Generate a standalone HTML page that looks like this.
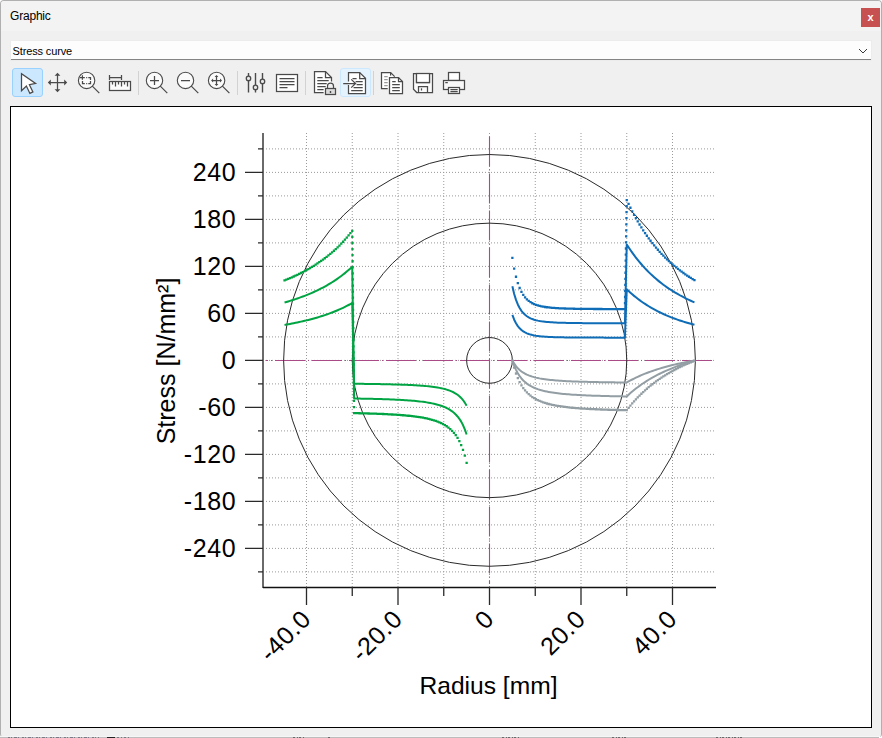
<!DOCTYPE html>
<html><head><meta charset="utf-8">
<style>
html,body{margin:0;padding:0;background:#fff;}
body{width:882px;height:738px;position:relative;overflow:hidden;font-family:"Liberation Sans",sans-serif;}
#win{position:absolute;left:0;top:0;width:880px;height:736px;border:1px solid #b0b0b0;border-bottom:none;border-radius:4px 4px 3px 3px;background:#f0f0f0;overflow:hidden;}
#bot{position:absolute;left:0;top:737px;width:879px;height:1px;background:#bcbcbc;}
#bl{position:absolute;left:0;top:736px;width:880px;height:1px;background:#f6f6f6;}
#title{position:absolute;left:0;top:0;width:880px;height:30px;background:#f3f3f3;}
#title span{position:absolute;left:9px;top:8px;font-size:12px;letter-spacing:-0.2px;color:#000;}
#close{position:absolute;left:860px;top:7px;width:19px;height:19px;background:#c75050;color:#fff;font-weight:bold;font-size:11px;text-align:center;line-height:18px;}
#dd{position:absolute;left:10px;top:40px;width:860px;height:18px;background:#fdfdfd;border-bottom:1px solid #848484;box-shadow:0 0 0 1px #ececec;}
#dd span{position:absolute;left:1.5px;top:3.8px;font-size:11px;letter-spacing:-0.13px;color:#000;}
#frame{position:absolute;left:9px;top:105px;width:860px;height:620px;border:1px solid #000;background:#fff;}
.btn{position:absolute;border-radius:3px;}
</style></head><body>
<div id="win">
 <div id="title"><span>Graphic</span></div>
 <div id="close">x</div>
 <div id="dd"><span>Stress curve</span>
  <svg style="position:absolute;left:847px;top:7px" width="10" height="6"><path d="M1 1L5 5L9 1" stroke="#3a3a3a" stroke-width="1" fill="none"/></svg>
 </div>
 <div class="btn" style="left:11px;top:67px;width:29px;height:27px;background:#cce8ff;border:1px solid #99d1ff"></div>
 <div class="btn" style="left:339px;top:67px;width:29px;height:27px;background:#e5f3ff;border:1px solid #cce8ff"></div>
 <div id="frame"></div>
</div>
<div id="bl"></div><div id="bot"></div>
<svg width="882" height="1" style="position:absolute;left:0;top:737px" shape-rendering="crispEdges">
<path d="M8 0.5H99" stroke="#6a6a7a" stroke-width="1" stroke-dasharray="2 1 1 2 3 1 1 3" opacity="0.8"/>
<path d="M107 0.5H115" stroke="#222" stroke-width="1"/>
<path d="M117 0.5H131" stroke="#6a6a7a" stroke-dasharray="2 2 1 2" opacity="0.8"/>
<path d="M293 0.5H304M328 0.5H330M502 0.5H520M612 0.5H628M716 0.5H744" stroke="#555" stroke-dasharray="2 2 1 1" opacity="0.8"/>
</svg>

<svg width="882" height="738" viewBox="0 0 882 738" style="position:absolute;left:0;top:0">
 <path d="M263 571.90H716M263 548.40H716M263 524.90H716M263 501.40H716M263 477.90H716M263 454.40H716M263 430.90H716M263 407.40H716M263 383.90H716M263 360.40H716M263 336.90H716M263 313.40H716M263 289.90H716M263 266.40H716M263 242.90H716M263 219.40H716M263 195.90H716M263 172.40H716M263 148.90H716M306.50 133V587M352.25 133V587M398.00 133V587M443.75 133V587M489.50 133V587M535.25 133V587M581.00 133V587M626.75 133V587M672.50 133V587" stroke="#9a9a9a" stroke-width="1" stroke-dasharray="1 2" fill="none"/>
 <path d="M265.5 360.5H714" stroke="#a94b87" stroke-width="1.1" stroke-dasharray="30 3 1 3" stroke-dashoffset="27.5" fill="none"/>
 <path d="M489.5 136.5V584" stroke="#a94b87" stroke-width="1.1" stroke-dasharray="30 3 1 3" fill="none"/>
 <circle cx="489.5" cy="360.4" r="205.88" fill="none" stroke="#2a2a2a" stroke-width="1"/>
 <circle cx="489.5" cy="360.4" r="137.25" fill="none" stroke="#2a2a2a" stroke-width="1"/>
 <circle cx="489.5" cy="360.4" r="22.88" fill="none" stroke="#2a2a2a" stroke-width="1"/>
 <path d="M466.62 405.84L464.81 402.62L462.99 400.04L461.18 397.94L459.36 396.21L457.55 394.77L455.73 393.55L453.92 392.51L452.10 391.62L450.29 390.85L448.47 390.18L446.66 389.60L444.84 389.08L443.03 388.63L441.21 388.22L439.40 387.86L437.58 387.53L435.77 387.24L433.95 386.97L432.14 386.73L430.32 386.52L428.50 386.32L426.69 386.13L424.87 385.97L423.06 385.81L421.24 385.67L419.43 385.54L417.61 385.42L415.80 385.31L413.98 385.21L412.17 385.11L410.35 385.02L408.54 384.93L406.72 384.86L404.91 384.78L403.09 384.71L401.28 384.65L399.46 384.59L397.65 384.53L395.83 384.48L394.02 384.43L392.20 384.38L390.38 384.33L388.57 384.29L386.75 384.25L384.94 384.21L383.12 384.17L381.31 384.14L379.49 384.10L377.68 384.07L375.86 384.04L374.05 384.01L372.23 383.99L370.42 383.96L368.60 383.93L366.79 383.91L364.97 383.89L363.16 383.87L361.34 383.85L359.53 383.82L357.71 383.81L355.90 383.79L354.08 383.77L352.25 302.97L350.42 304.01L348.59 305.00L346.76 305.97L344.93 306.89L343.10 307.78L341.27 308.64L339.44 309.46L337.61 310.26L335.78 311.03L333.95 311.77L332.12 312.49L330.29 313.18L328.46 313.85L326.63 314.49L324.80 315.12L322.97 315.72L321.14 316.30L319.31 316.87L317.48 317.42L315.65 317.95L313.82 318.46L311.99 318.96L310.16 319.44L308.33 319.91L306.50 320.36L304.67 320.80L302.84 321.23L301.01 321.65L299.18 322.05L297.35 322.44L295.52 322.82L293.69 323.19L291.86 323.55L290.03 323.90L288.20 324.24L286.37 324.58L284.54 324.90" stroke="#00a443" stroke-width="2.0" fill="none" stroke-linejoin="round"/>
<path d="M512.38 360.40L514.19 363.62L516.01 366.20L517.82 368.30L519.64 370.03L521.45 371.48L523.27 372.69L525.08 373.73L526.90 374.62L528.71 375.39L530.53 376.06L532.34 376.64L534.16 377.16L535.97 377.62L537.79 378.02L539.60 378.39L541.42 378.71L543.23 379.00L545.05 379.27L546.86 379.51L548.68 379.73L550.50 379.93L552.31 380.11L554.13 380.27L555.94 380.43L557.76 380.57L559.57 380.70L561.39 380.82L563.20 380.93L565.02 381.04L566.83 381.13L568.65 381.22L570.46 381.31L572.28 381.39L574.09 381.46L575.91 381.53L577.72 381.59L579.54 381.65L581.35 381.71L583.17 381.77L584.98 381.82L586.80 381.87L588.62 381.91L590.43 381.95L592.25 381.99L594.06 382.03L595.88 382.07L597.69 382.11L599.51 382.14L601.32 382.17L603.14 382.20L604.95 382.23L606.77 382.26L608.58 382.28L610.40 382.31L612.21 382.33L614.03 382.35L615.84 382.38L617.66 382.40L619.47 382.42L621.29 382.44L623.10 382.46L624.92 382.47L626.75 382.49L628.58 381.45L630.41 380.45L632.24 379.49L634.07 378.57L635.90 377.68L637.73 376.82L639.56 375.99L641.39 375.19L643.22 374.43L645.05 373.68L646.88 372.97L648.71 372.28L650.54 371.61L652.37 370.96L654.20 370.34L656.03 369.74L657.86 369.15L659.69 368.59L661.52 368.04L663.35 367.51L665.18 367.00L667.01 366.50L668.84 366.02L670.67 365.55L672.50 365.09L674.33 364.65L676.16 364.23L677.99 363.81L679.82 363.41L681.65 363.01L683.48 362.63L685.31 362.26L687.14 361.90L688.97 361.55L690.80 361.21L692.63 360.88L694.46 360.56" stroke="#939ea4" stroke-width="2.0" fill="none" stroke-linejoin="round"/>
<path d="M512.38 314.96L514.19 319.69L516.01 323.31L517.82 326.12L519.64 328.30L521.45 330.02L523.27 331.38L525.08 332.46L526.90 333.32L528.71 334.03L530.53 334.59L532.34 335.06L534.16 335.44L535.97 335.76L537.79 336.02L539.60 336.24L541.42 336.43L543.23 336.59L545.05 336.72L546.86 336.83L548.68 336.93L550.50 337.01L552.31 337.09L554.13 337.15L555.94 337.20L557.76 337.25L559.57 337.30L561.39 337.33L563.20 337.36L565.02 337.39L566.83 337.42L568.65 337.44L570.46 337.46L572.28 337.48L574.09 337.50L575.91 337.51L577.72 337.53L579.54 337.54L581.35 337.55L583.17 337.56L584.98 337.57L586.80 337.57L588.62 337.58L590.43 337.59L592.25 337.60L594.06 337.60L595.88 337.61L597.69 337.61L599.51 337.62L601.32 337.62L603.14 337.62L604.95 337.63L606.77 337.63L608.58 337.63L610.40 337.64L612.21 337.64L614.03 337.64L615.84 337.64L617.66 337.64L619.47 337.65L621.29 337.65L623.10 337.65L624.92 337.65L626.75 289.30L628.58 291.04L630.41 292.71L632.24 294.32L634.07 295.86L635.90 297.34L637.73 298.77L639.56 300.14L641.39 301.46L643.22 302.72L645.05 303.94L646.88 305.12L648.71 306.25L650.54 307.35L652.37 308.40L654.20 309.41L656.03 310.39L657.86 311.34L659.69 312.25L661.52 313.13L663.35 313.98L665.18 314.80L667.01 315.60L668.84 316.36L670.67 317.10L672.50 317.82L674.33 318.51L676.16 319.18L677.99 319.83L679.82 320.46L681.65 321.07L683.48 321.66L685.31 322.23L687.14 322.78L688.97 323.31L690.80 323.83L692.63 324.33L694.46 324.82" stroke="#0f6cb6" stroke-width="2.0" fill="none" stroke-linejoin="round"/>
<path d="M466.62 434.53L464.81 429.28L462.99 425.07L461.18 421.64L459.36 418.82L457.55 416.46L455.73 414.47L453.92 412.78L452.10 411.33L450.29 410.08L448.47 408.98L446.66 408.03L444.84 407.19L443.03 406.44L441.21 405.78L439.40 405.19L437.58 404.66L435.77 404.18L433.95 403.75L432.14 403.36L430.32 403.00L428.50 402.68L426.69 402.38L424.87 402.11L423.06 401.86L421.24 401.63L419.43 401.41L417.61 401.22L415.80 401.03L413.98 400.86L412.17 400.71L410.35 400.56L408.54 400.42L406.72 400.29L404.91 400.17L403.09 400.06L401.28 399.95L399.46 399.86L397.65 399.76L395.83 399.67L394.02 399.59L392.20 399.51L390.38 399.44L388.57 399.37L386.75 399.30L384.94 399.24L383.12 399.18L381.31 399.12L379.49 399.07L377.68 399.01L375.86 398.96L374.05 398.92L372.23 398.87L370.42 398.83L368.60 398.79L366.79 398.75L364.97 398.71L363.16 398.68L361.34 398.64L359.53 398.61L357.71 398.58L355.90 398.55L354.08 398.52L352.25 266.71L350.42 268.41L348.59 270.04L346.76 271.61L344.93 273.12L343.10 274.57L341.27 275.97L339.44 277.31L337.61 278.61L335.78 279.87L333.95 281.08L332.12 282.24L330.29 283.37L328.46 284.46L326.63 285.51L324.80 286.53L322.97 287.52L321.14 288.47L319.31 289.39L317.48 290.28L315.65 291.15L313.82 291.99L311.99 292.80L310.16 293.59L308.33 294.35L306.50 295.09L304.67 295.81L302.84 296.51L301.01 297.18L299.18 297.84L297.35 298.48L295.52 299.10L293.69 299.71L291.86 300.29L290.03 300.87L288.20 301.42L286.37 301.96L284.54 302.49" stroke="#00a443" stroke-width="2.0" fill="none" stroke-linejoin="round"/>
<path d="M512.38 360.40L514.19 365.65L516.01 369.86L517.82 373.28L519.64 376.11L521.45 378.47L523.27 380.45L525.08 382.14L526.90 383.60L528.71 384.85L530.53 385.94L532.34 386.90L534.16 387.74L535.97 388.48L537.79 389.15L539.60 389.74L541.42 390.27L543.23 390.75L545.05 391.18L546.86 391.57L548.68 391.93L550.50 392.25L552.31 392.55L554.13 392.82L555.94 393.07L557.76 393.30L559.57 393.51L561.39 393.71L563.20 393.89L565.02 394.06L566.83 394.22L568.65 394.37L570.46 394.50L572.28 394.63L574.09 394.75L575.91 394.87L577.72 394.97L579.54 395.07L581.35 395.16L583.17 395.25L584.98 395.34L586.80 395.41L588.62 395.49L590.43 395.56L592.25 395.63L594.06 395.69L595.88 395.75L597.69 395.81L599.51 395.86L601.32 395.91L603.14 395.96L604.95 396.01L606.77 396.05L608.58 396.10L610.40 396.14L612.21 396.17L614.03 396.21L615.84 396.25L617.66 396.28L619.47 396.31L621.29 396.35L623.10 396.38L624.92 396.41L626.75 396.43L628.58 394.74L630.41 393.11L632.24 391.54L634.07 390.03L635.90 388.58L637.73 387.18L639.56 385.83L641.39 384.53L643.22 383.28L645.05 382.07L646.88 380.90L648.71 379.77L650.54 378.69L652.37 377.63L654.20 376.62L656.03 375.63L657.86 374.68L659.69 373.76L661.52 372.86L663.35 372.00L665.18 371.16L667.01 370.35L668.84 369.56L670.67 368.80L672.50 368.06L674.33 367.34L676.16 366.64L677.99 365.96L679.82 365.30L681.65 364.67L683.48 364.04L685.31 363.44L687.14 362.85L688.97 362.28L690.80 361.73L692.63 361.18L694.46 360.66" stroke="#939ea4" stroke-width="2.0" fill="none" stroke-linejoin="round"/>
<path d="M512.38 286.27L514.19 293.99L516.01 299.90L517.82 304.47L519.64 308.04L521.45 310.84L523.27 313.05L525.08 314.82L526.90 316.23L528.71 317.38L530.53 318.31L532.34 319.07L534.16 319.69L535.97 320.21L537.79 320.64L539.60 321.00L541.42 321.30L543.23 321.55L545.05 321.77L546.86 321.96L548.68 322.12L550.50 322.25L552.31 322.37L554.13 322.47L555.94 322.56L557.76 322.64L559.57 322.71L561.39 322.77L563.20 322.82L565.02 322.87L566.83 322.91L568.65 322.95L570.46 322.98L572.28 323.01L574.09 323.04L575.91 323.07L577.72 323.09L579.54 323.11L581.35 323.12L583.17 323.14L584.98 323.15L586.80 323.17L588.62 323.18L590.43 323.19L592.25 323.20L594.06 323.21L595.88 323.22L597.69 323.23L599.51 323.23L601.32 323.24L603.14 323.25L604.95 323.25L606.77 323.26L608.58 323.26L610.40 323.27L612.21 323.27L614.03 323.27L615.84 323.28L617.66 323.28L619.47 323.28L621.29 323.29L623.10 323.29L624.92 323.29L626.75 244.42L628.58 247.26L630.41 249.99L632.24 252.61L634.07 255.12L635.90 257.54L637.73 259.86L639.56 262.10L641.39 264.25L643.22 266.32L645.05 268.31L646.88 270.23L648.71 272.08L650.54 273.86L652.37 275.57L654.20 277.23L656.03 278.83L657.86 280.37L659.69 281.86L661.52 283.29L663.35 284.68L665.18 286.02L667.01 287.31L668.84 288.57L670.67 289.77L672.50 290.94L674.33 292.07L676.16 293.17L677.99 294.23L679.82 295.25L681.65 296.24L683.48 297.20L685.31 298.13L687.14 299.03L688.97 299.90L690.80 300.75L692.63 301.57L694.46 302.36" stroke="#0f6cb6" stroke-width="2.0" fill="none" stroke-linejoin="round"/>
<path d="M465.48 462.89h2.3M463.66 455.63h2.3M461.84 449.81h2.3M460.03 445.07h2.3M458.21 441.17h2.3M456.40 437.91h2.3M454.58 435.16h2.3M452.77 432.82h2.3M450.95 430.82h2.3M449.14 429.08h2.3M447.32 427.57h2.3M445.51 426.25h2.3M443.69 425.09h2.3M441.88 424.06h2.3M440.06 423.14h2.3M438.25 422.32h2.3M436.43 421.59h2.3M434.62 420.93h2.3M432.80 420.33h2.3M430.99 419.79h2.3M429.17 419.30h2.3M427.35 418.85h2.3M425.54 418.44h2.3M423.72 418.06h2.3M421.91 417.72h2.3M420.09 417.40h2.3M418.28 417.10h2.3M416.46 416.83h2.3M414.65 416.58h2.3M412.83 416.35h2.3M411.02 416.13h2.3M409.20 415.92h2.3M407.39 415.73h2.3M405.57 415.56h2.3M403.76 415.39h2.3M401.94 415.23h2.3M400.13 415.09h2.3M398.31 414.95h2.3M396.50 414.82h2.3M394.68 414.70h2.3M392.87 414.58h2.3M391.05 414.48h2.3M389.23 414.37h2.3M387.42 414.28h2.3M385.60 414.18h2.3M383.79 414.10h2.3M381.97 414.01h2.3M380.16 413.93h2.3M378.34 413.86h2.3M376.53 413.79h2.3M374.71 413.72h2.3M372.90 413.66h2.3M371.08 413.59h2.3M369.27 413.53h2.3M367.45 413.48h2.3M365.64 413.42h2.3M363.82 413.37h2.3M362.01 413.32h2.3M360.19 413.28h2.3M358.38 413.23h2.3M356.56 413.19h2.3M354.75 413.15h2.3M352.93 413.11h2.3M351.10 230.87h2.3M349.27 233.21h2.3M347.44 235.47h2.3M345.61 237.63h2.3M343.78 239.72h2.3M341.95 241.73h2.3M340.12 243.66h2.3M338.29 245.53h2.3M336.46 247.32h2.3M334.63 249.05h2.3M332.80 250.73h2.3M330.97 252.34h2.3M329.14 253.90h2.3M327.31 255.41h2.3M325.48 256.86h2.3M323.65 258.27h2.3M321.82 259.63h2.3M319.99 260.95h2.3M318.16 262.22h2.3M316.33 263.46h2.3M314.50 264.65h2.3M312.67 265.81h2.3M310.84 266.93h2.3M309.01 268.02h2.3M307.18 269.08h2.3M305.35 270.10h2.3M303.52 271.10h2.3M301.69 272.06h2.3M299.86 273.00h2.3M298.03 273.91h2.3M296.20 274.79h2.3M294.37 275.65h2.3M292.54 276.49h2.3M290.71 277.30h2.3M288.88 278.09h2.3M287.05 278.86h2.3M285.22 279.60h2.3M283.39 280.33h2.3M351.16 236.94h2.3M351.22 243.02h2.3M351.28 249.09h2.3M351.34 255.17h2.3M351.41 261.24h2.3M351.47 267.32h2.3M351.53 273.39h2.3M351.59 279.46h2.3M351.65 285.54h2.3M351.71 291.61h2.3M351.77 297.69h2.3M351.83 303.76h2.3M351.89 309.84h2.3M351.95 315.91h2.3M352.01 321.99h2.3M352.08 328.06h2.3M352.14 334.14h2.3M352.20 340.21h2.3M352.26 346.29h2.3M352.32 352.36h2.3M352.38 358.43h2.3M352.44 364.51h2.3M352.50 370.58h2.3M352.56 376.66h2.3M352.62 382.73h2.3M352.69 388.81h2.3M352.75 394.88h2.3M352.81 400.96h2.3M352.87 407.03h2.3" stroke="#00a443" stroke-width="2.3" fill="none"/>
<path d="M511.23 360.40h2.3M513.04 367.66h2.3M514.86 373.48h2.3M516.67 378.21h2.3M518.49 382.12h2.3M520.30 385.38h2.3M522.12 388.13h2.3M523.93 390.46h2.3M525.75 392.47h2.3M527.56 394.20h2.3M529.38 395.71h2.3M531.19 397.03h2.3M533.01 398.20h2.3M534.82 399.23h2.3M536.64 400.14h2.3M538.45 400.96h2.3M540.27 401.70h2.3M542.08 402.36h2.3M543.90 402.95h2.3M545.71 403.50h2.3M547.53 403.99h2.3M549.35 404.44h2.3M551.16 404.85h2.3M552.98 405.22h2.3M554.79 405.57h2.3M556.61 405.89h2.3M558.42 406.18h2.3M560.24 406.45h2.3M562.05 406.71h2.3M563.87 406.94h2.3M565.68 407.16h2.3M567.50 407.36h2.3M569.31 407.55h2.3M571.13 407.73h2.3M572.94 407.90h2.3M574.76 408.05h2.3M576.57 408.20h2.3M578.39 408.34h2.3M580.20 408.47h2.3M582.02 408.59h2.3M583.83 408.70h2.3M585.65 408.81h2.3M587.47 408.91h2.3M589.28 409.01h2.3M591.10 409.10h2.3M592.91 409.19h2.3M594.73 409.27h2.3M596.54 409.35h2.3M598.36 409.43h2.3M600.17 409.50h2.3M601.99 409.57h2.3M603.80 409.63h2.3M605.62 409.69h2.3M607.43 409.75h2.3M609.25 409.81h2.3M611.06 409.86h2.3M612.88 409.91h2.3M614.69 409.96h2.3M616.51 410.01h2.3M618.32 410.06h2.3M620.14 410.10h2.3M621.95 410.14h2.3M623.77 410.18h2.3M625.60 410.22h2.3M627.43 407.88h2.3M629.26 405.62h2.3M631.09 403.45h2.3M632.92 401.37h2.3M634.75 399.36h2.3M636.58 397.43h2.3M638.41 395.56h2.3M640.24 393.77h2.3M642.07 392.03h2.3M643.90 390.36h2.3M645.73 388.75h2.3M647.56 387.19h2.3M649.39 385.68h2.3M651.22 384.23h2.3M653.05 382.82h2.3M654.88 381.46h2.3M656.71 380.14h2.3M658.54 378.87h2.3M660.37 377.63h2.3M662.20 376.44h2.3M664.03 375.28h2.3M665.86 374.16h2.3M667.69 373.07h2.3M669.52 372.01h2.3M671.35 370.99h2.3M673.18 369.99h2.3M675.01 369.03h2.3M676.84 368.09h2.3M678.67 367.18h2.3M680.50 366.30h2.3M682.33 365.44h2.3M684.16 364.60h2.3M685.99 363.79h2.3M687.82 363.00h2.3M689.65 362.23h2.3M691.48 361.48h2.3M693.31 360.76h2.3" stroke="#939ea4" stroke-width="2.3" fill="none"/>
<path d="M511.23 257.91h2.3M513.04 268.58h2.3M514.86 276.76h2.3M516.67 283.08h2.3M518.49 288.00h2.3M520.30 291.88h2.3M522.12 294.94h2.3M523.93 297.38h2.3M525.75 299.34h2.3M527.56 300.92h2.3M529.38 302.20h2.3M531.19 303.25h2.3M533.01 304.11h2.3M534.82 304.83h2.3M536.64 305.42h2.3M538.45 305.92h2.3M540.27 306.34h2.3M542.08 306.69h2.3M543.90 306.99h2.3M545.71 307.25h2.3M547.53 307.47h2.3M549.35 307.66h2.3M551.16 307.82h2.3M552.98 307.96h2.3M554.79 308.09h2.3M556.61 308.20h2.3M558.42 308.29h2.3M560.24 308.37h2.3M562.05 308.45h2.3M563.87 308.51h2.3M565.68 308.57h2.3M567.50 308.62h2.3M569.31 308.67h2.3M571.13 308.71h2.3M572.94 308.75h2.3M574.76 308.78h2.3M576.57 308.81h2.3M578.39 308.84h2.3M580.20 308.86h2.3M582.02 308.88h2.3M583.83 308.90h2.3M585.65 308.92h2.3M587.47 308.94h2.3M589.28 308.95h2.3M591.10 308.97h2.3M592.91 308.98h2.3M594.73 308.99h2.3M596.54 309.00h2.3M598.36 309.01h2.3M600.17 309.02h2.3M601.99 309.03h2.3M603.80 309.04h2.3M605.62 309.05h2.3M607.43 309.05h2.3M609.25 309.06h2.3M611.06 309.06h2.3M612.88 309.07h2.3M614.69 309.07h2.3M616.51 309.08h2.3M618.32 309.08h2.3M620.14 309.09h2.3M621.95 309.09h2.3M623.77 309.09h2.3M625.60 200.04h2.3M627.43 203.97h2.3M629.26 207.75h2.3M631.09 211.37h2.3M632.92 214.84h2.3M634.75 218.19h2.3M636.58 221.40h2.3M638.41 224.49h2.3M640.24 227.46h2.3M642.07 230.32h2.3M643.90 233.07h2.3M645.73 235.73h2.3M647.56 238.28h2.3M649.39 240.75h2.3M651.22 243.12h2.3M653.05 245.41h2.3M654.88 247.62h2.3M656.71 249.75h2.3M658.54 251.80h2.3M660.37 253.79h2.3M662.20 255.71h2.3M664.03 257.56h2.3M665.86 259.35h2.3M667.69 261.08h2.3M669.52 262.75h2.3M671.35 264.37h2.3M673.18 265.93h2.3M675.01 267.45h2.3M676.84 268.91h2.3M678.67 270.32h2.3M680.50 271.70h2.3M682.33 273.02h2.3M684.16 274.31h2.3M685.99 275.55h2.3M687.82 276.76h2.3M689.65 277.92h2.3M691.48 279.06h2.3M693.31 280.15h2.3M625.50 206.10h2.3M625.40 212.16h2.3M625.30 218.22h2.3M625.19 224.28h2.3M625.09 230.34h2.3M624.99 236.39h2.3M624.89 242.45h2.3M624.79 248.51h2.3M624.69 254.57h2.3M624.58 260.63h2.3M624.48 266.69h2.3M624.38 272.74h2.3M624.28 278.80h2.3M624.18 284.86h2.3M624.08 290.92h2.3M623.97 296.98h2.3M623.87 303.04h2.3" stroke="#0f6cb6" stroke-width="2.3" fill="none"/>
 <rect x="262" y="133" width="2" height="455" fill="#6a6a6a"/>
 <path d="M263 587.5H716" stroke="#111" stroke-width="1.3"/>
 <path d="M245 548.40H263M245 501.40H263M245 454.40H263M245 407.40H263M245 360.40H263M245 313.40H263M245 266.40H263M245 219.40H263M245 172.40H263M258 571.90H263M258 524.90H263M258 477.90H263M258 430.90H263M258 383.90H263M258 336.90H263M258 289.90H263M258 242.90H263M258 195.90H263M258 148.90H263M306.50 587V605M398.00 587V605M489.50 587V605M581.00 587V605M672.50 587V605M352.25 587V596M443.75 587V596M535.25 587V596M626.75 587V596" stroke="#2a2a2a" stroke-width="1.3" fill="none"/>
 <g font-family="'Liberation Sans', sans-serif" font-size="25" fill="#000">
 <text x="236.3" y="557.4" text-anchor="end" letter-spacing="0.6">-240</text><text x="236.3" y="510.4" text-anchor="end" letter-spacing="0.6">-180</text><text x="236.3" y="463.4" text-anchor="end" letter-spacing="0.6">-120</text><text x="236.3" y="416.4" text-anchor="end" letter-spacing="0.6">-60</text><text x="236.3" y="369.4" text-anchor="end" letter-spacing="0.6">0</text><text x="236.3" y="322.4" text-anchor="end" letter-spacing="0.6">60</text><text x="236.3" y="275.4" text-anchor="end" letter-spacing="0.6">120</text><text x="236.3" y="228.4" text-anchor="end" letter-spacing="0.6">180</text><text x="236.3" y="181.4" text-anchor="end" letter-spacing="0.6">240</text>
 <text transform="translate(312.4 620.6) rotate(-45)" text-anchor="end" letter-spacing="0.6">-40.0</text><text transform="translate(403.9 620.6) rotate(-45)" text-anchor="end" letter-spacing="0.6">-20.0</text><text transform="translate(495.4 620.6) rotate(-45)" text-anchor="end" letter-spacing="0.6">0</text><text transform="translate(586.9 620.6) rotate(-45)" text-anchor="end" letter-spacing="0.6">20.0</text><text transform="translate(678.4 620.6) rotate(-45)" text-anchor="end" letter-spacing="0.6">40.0</text>
 </g>
 <text x="488.5" y="694" text-anchor="middle" font-family="'Liberation Sans', sans-serif" font-size="24.6">Radius [mm]</text>
 <text transform="translate(175 361) rotate(-90)" text-anchor="middle" font-family="'Liberation Sans', sans-serif" font-size="25">Stress [N/mm²]</text>
</svg>

<svg width="882" height="110" viewBox="0 0 882 110" style="position:absolute;left:0;top:0" fill="none" stroke="#4a4a4a" stroke-width="1.25" stroke-linejoin="miter">
 <!-- cursor -->
 <path d="M21.5 73.8V90.8L26.4 86L29.9 93.4L32.9 91.9L29.4 84.7L35.6 83.4Z" fill="#fff"/>
 <!-- move -->
 <path d="M57.5 74.5V91M49 82.5H66"/>
 <path d="M57.5 72.8L54.6 75.8H60.4Z M57.5 92.2L54.6 89.2H60.4Z M47.8 82.5L50.8 79.6V85.4Z M67.2 82.5L64.2 79.6V85.4Z" fill="#4a4a4a" stroke="none"/>
 <!-- zoom rect -->
 <circle cx="86.6" cy="80.4" r="8.2" fill="#fbfbfb" stroke-width="1.1"/>
 <path d="M92.3 86.1L99.3 93.1"/>
 <path d="M80 77.5H84.8M82.4 75.2V79.8M88.3 77.5H90.5V80M82.5 81V83.5H84.8M88.3 83.5H90.5V81M86.2 77.5h1M86.2 83.5h1"/>
 <!-- ruler -->
 <path d="M109.5 77.5H121.5M109.5 75V80M121.5 75V80"/>
 <rect x="109.5" y="81.5" width="21" height="9" fill="#fbfbfb"/>
 <path d="M112.5 81.5V84.6M115.5 81.5V86.6M118.5 81.5V84.6M121.5 81.5V86.6M124.5 81.5V84.6M127.5 81.5V86.6"/>
 <!-- separators -->
 <path d="M138.5 71V95M237.5 71V95M305.5 71V95M373.5 71V95" stroke="#d2d2d2" stroke-width="1"/>
 <!-- zoom in -->
 <circle cx="154.5" cy="80.4" r="8.2" fill="#fbfbfb" stroke-width="1.1"/>
 <path d="M160.3 86.1L167.3 93.1M150 80.5H159M154.5 76V85"/>
 <!-- zoom out -->
 <circle cx="185.5" cy="80.4" r="8.2" fill="#fbfbfb" stroke-width="1.1"/>
 <path d="M191.3 86.1L198.3 93.1M181 80.5H190"/>
 <!-- zoom fit -->
 <circle cx="216.6" cy="80.4" r="8.2" fill="#fbfbfb" stroke-width="1.1"/>
 <path d="M222.4 86.1L229.4 93.1M212.5 80.5H221M216.5 76.5V85"/>
 <path d="M216.5 75L214.6 77H218.4Z M216.5 86L214.6 84H218.4Z M211.1 80.5L213.1 78.6V82.4Z M222 80.5L220 78.6V82.4Z" fill="#4a4a4a" stroke="none"/>
 <!-- sliders -->
 <path d="M248.5 73V76.2M248.5 80.6V92.5M255.5 73V85.2M255.5 89.6V92.5M262.5 73V79.2M262.5 83.6V92.5" stroke-width="1.4"/>
 <circle cx="248.5" cy="78.4" r="2.2" fill="#e8e8e8" stroke-width="1.3"/>
 <circle cx="255.5" cy="87.4" r="2.2" fill="#e8e8e8" stroke-width="1.3"/>
 <circle cx="262.5" cy="81.4" r="2.2" fill="#e8e8e8" stroke-width="1.3"/>
 <!-- text box -->
 <rect x="276.5" y="74.5" width="21" height="17" fill="#fff"/>
 <path d="M279.5 78.5H294.5M279.5 81.5H294.5M279.5 84.5H294.5M279.5 87.5H287.5"/>
 <!-- doc lock -->
 <path d="M323.6 92.5H314.5V71.5H325.5L331.5 77.5V81.4" fill="#fff"/>
 <path d="M325.5 71.5V77.5H331.5"/>
 <path d="M317.3 77.5H322.6M317.3 80.5H328.7M317.3 83.5H326.7M317.3 86.5H325.7M317.3 89.5H323.6"/>
 <path d="M327.5 88.3V86a3 3 0 0 1 6 0V88.3"/>
 <rect x="325.5" y="88.5" width="10" height="6" fill="#dcdcdc"/>
 <path d="M330.5 91V93" stroke-width="1.4"/>
 <!-- import doc -->
 <path d="M348.5 81.4V72.5H359.7L365.5 78.3V93.5H348.5V85.1" fill="#fff"/>
 <path d="M359.7 72.5V78.5H365.5"/>
 <path d="M343.2 83.5H355.6M351.2 79.4L355.6 83.5L351.2 87.6"/>
 <path d="M352.5 78.5H356.6M355.6 81.5H362.7M356.6 84.5H362.7M353.6 87.5H362.7M351.2 90.5H362.7"/>
 <!-- copy -->
 <path d="M387.7 88.5H381.5V72.5H390.6L394.7 76.6" fill="#fff"/>
 <path d="M390.6 72.5V75.6"/>
 <path d="M384.2 76.5H387.7M384.2 79.5H387.7M384.2 82.5H387.7M384.2 85.5H387.7" stroke="#9a9a9a"/>
 <path d="M389.5 93.5V77.5H398.5L402.5 81.5V93.5Z" fill="#fff"/>
 <path d="M398.5 77.5V81.5H402.5"/>
 <path d="M392.2 81.5H395.7M392.2 84.5H399.8M392.2 87.5H399.8M392.2 90.5H399.8"/>
 <!-- save -->
 <path d="M413.5 73.5H432.5V92.5H416.7L413.5 89.2Z" fill="#fbfbfb"/>
 <path d="M416.5 73.5V82.5H429.5V73.5"/>
 <rect x="416.5" y="73.5" width="13" height="9" fill="#fff"/>
 <path d="M418.5 92.5V86.5H427.5V92.5"/>
 <path d="M421.5 88.3V90.5"/>
 <!-- print -->
 <rect x="448.5" y="72.5" width="11" height="8" fill="#fff"/>
 <rect x="443.5" y="80.5" width="21" height="9" fill="#f8f8f8"/>
 <rect x="448.5" y="87.5" width="11" height="6" fill="#fff"/>
 <path d="M450.4 89.5H457.7M450.4 91.5H457.7M445.3 82.5H447.8"/>
</svg>

</body></html>
